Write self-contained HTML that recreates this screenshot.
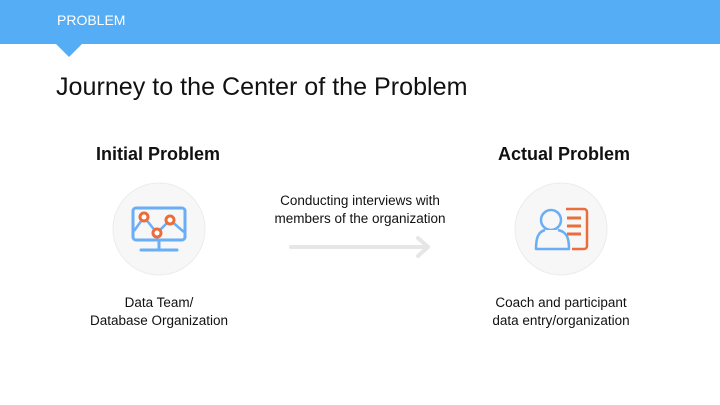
<!DOCTYPE html>
<html><head><style>
body{margin:0;width:720px;height:405px;background:#fff;font-family:"Liberation Sans",sans-serif;position:relative;overflow:hidden}
.hdr{position:absolute;left:0;top:0;width:720px;height:44px;background:#55adf5}
.t{position:absolute;white-space:nowrap}
</style></head><body>
<div class="hdr"></div>
<svg style="position:absolute;left:0;top:0" width="720" height="405">
<polygon points="56,44 82,44 69,57" fill="#55adf5"/>
<circle cx="159" cy="229" r="46" fill="#f7f7f7" stroke="#ececec"/>
<circle cx="561" cy="229" r="46" fill="#f7f7f7" stroke="#ececec"/>
<rect x="133" y="208" width="52" height="32" rx="3" fill="none" stroke="#6aaef5" stroke-width="3"/>
<line x1="159" y1="240" x2="159" y2="250" stroke="#6aaef5" stroke-width="3"/>
<line x1="141" y1="250" x2="177" y2="250" stroke="#6aaef5" stroke-width="3" stroke-linecap="round"/>
<polyline points="134,231 144,217 157,233 170,220 184,232" fill="none" stroke="#6aaef5" stroke-width="2.5"/>
<circle cx="144" cy="217" r="4" fill="#fff" stroke="#ea6d3a" stroke-width="3"/>
<circle cx="170" cy="220" r="4" fill="#fff" stroke="#ea6d3a" stroke-width="3"/>
<circle cx="157" cy="233" r="4" fill="#fff" stroke="#ea6d3a" stroke-width="3"/>
<path d="M566 209 H584 a3 3 0 0 1 3 3 V246 a3 3 0 0 1 -3 3 H572" fill="none" stroke="#ea6d3a" stroke-width="2.5"/>
<line x1="567" y1="218" x2="581" y2="218" stroke="#ea6d3a" stroke-width="3"/>
<line x1="567" y1="226" x2="581" y2="226" stroke="#ea6d3a" stroke-width="3"/>
<line x1="567" y1="234" x2="581" y2="234" stroke="#ea6d3a" stroke-width="3"/>
<circle cx="551" cy="220" r="10" fill="#f7f7f7" stroke="#6aaef5" stroke-width="2.5"/>
<path d="M545 230 C538 232 536 238 536 249 H569 C569 238 567 232 558 230" fill="#f7f7f7" stroke="#6aaef5" stroke-width="2.5" stroke-linejoin="round"/>
<line x1="291" y1="247" x2="428" y2="247" stroke="#e6e6e6" stroke-width="4" stroke-linecap="round"/>
<polyline points="418,238 428,247 418,256" fill="none" stroke="#e6e6e6" stroke-width="4" stroke-linecap="round" stroke-linejoin="round"/>
</svg>
<div class="t" style="left:57px;top:12px;font-size:14px;color:#fff">PROBLEM</div>
<div class="t" style="left:56px;top:73px;font-size:25.1px;color:#111">Journey to the Center of the Problem</div>
<div class="t" style="left:96px;top:144px;font-size:18px;font-weight:bold;color:#111">Initial Problem</div>
<div class="t" style="left:498px;top:144px;font-size:18px;font-weight:bold;color:#111">Actual Problem</div>
<div class="t" style="left:260px;top:192px;width:200px;text-align:center;font-size:13.5px;line-height:18px;color:#111">Conducting interviews with<br>members of the organization</div>
<div class="t" style="left:59px;top:294px;width:200px;text-align:center;font-size:13.5px;line-height:18px;color:#111">Data Team/<br>Database Organization</div>
<div class="t" style="left:461px;top:294px;width:200px;text-align:center;font-size:13.5px;line-height:18px;color:#111">Coach and participant<br>data entry/organization</div>
</body></html>
